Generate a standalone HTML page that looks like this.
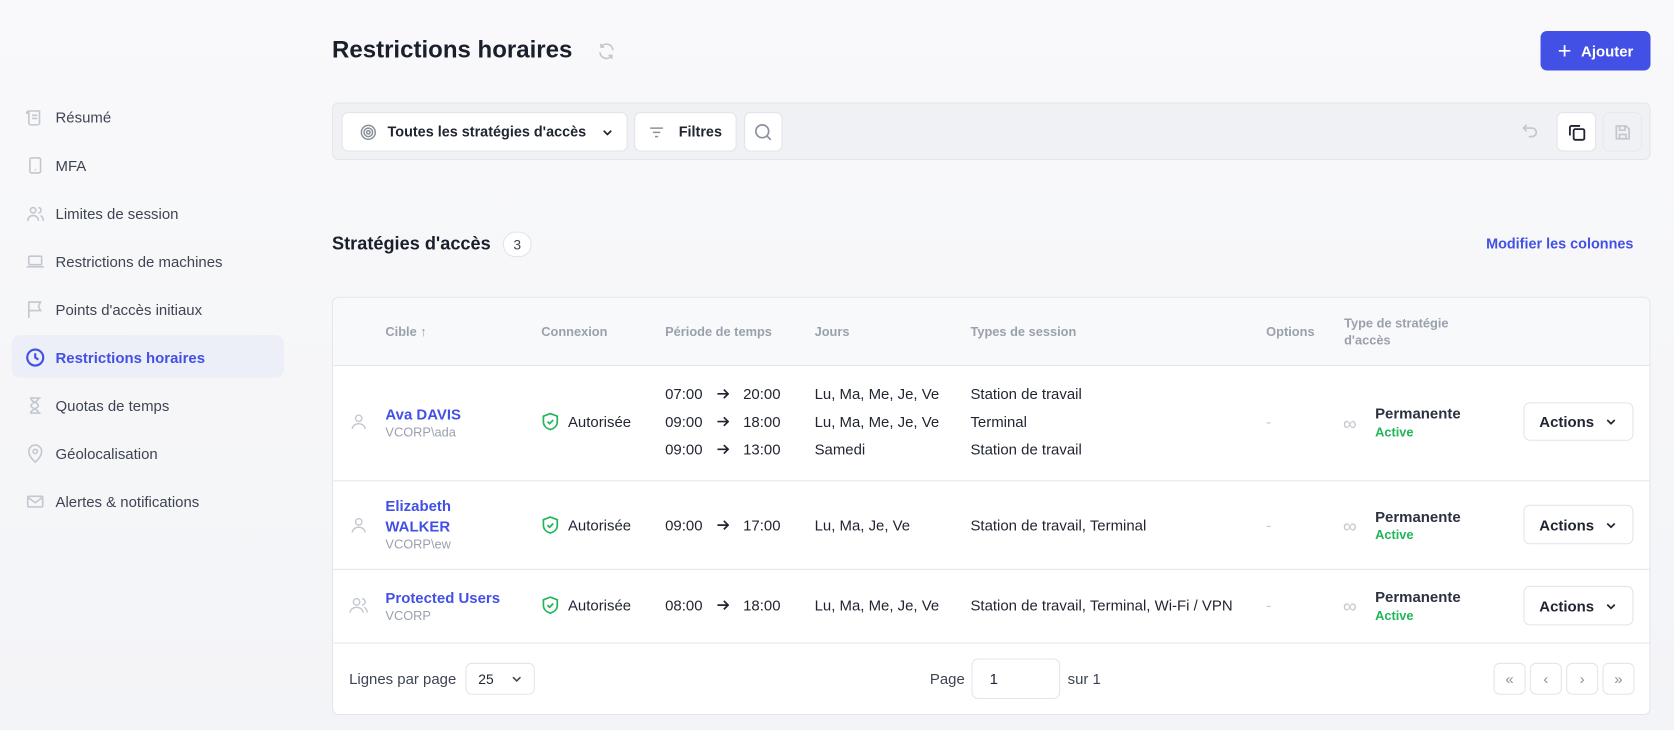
<!DOCTYPE html>
<html><head><meta charset="utf-8"><style>
html,body{margin:0;padding:0;width:1674px;height:730px;overflow:hidden;background:#f6f7f9}
#w{position:absolute;left:0;top:0;width:1568px;height:684px;transform:scale(1.06760,1.06725);transform-origin:0 0;font-family:"Liberation Sans",sans-serif;color:#1f2430;background:linear-gradient(180deg,#f9f9fb,#f3f4f7)}
.a{position:absolute}
.nav{position:absolute;left:24px;font-size:14px;color:#3d4452;display:flex;align-items:center;height:20px}
.nav svg{width:18px;height:18px;margin-right:10px;stroke:#c3c7cf;fill:none;stroke-width:1.5}
.btn{position:absolute;background:#fff;border:1px solid #e2e4e9;border-radius:6px;box-sizing:border-box;display:flex;align-items:center;justify-content:center;font-size:14px;font-weight:bold;color:#1f2430}
.th{position:absolute;font-size:12px;font-weight:bold;color:#9aa1ad;line-height:16px}
.t{position:absolute;font-size:14px;color:#1f2430;white-space:nowrap}
.hl{position:absolute;left:0;width:1235px;height:1px;background:#e3e5ea}
.lnk{color:#4350e6;font-weight:bold}
.sub{font-size:12px;color:#9aa1ad}
.grn{font-size:12px;color:#22b55a;font-weight:bold}
.ar{display:inline-block;width:12px;height:10px;margin:0 13px 0 13px;vertical-align:0px}
</style></head><body><div id="w">

<div class="nav" style="top:100px"><svg viewBox="0 0 18 18"><path d="M3 3h10v11a2 2 0 0 1-2 2H5M3 3a2 2 0 0 0-2 2h2M6 7h5M6 10h5M5 16a2 2 0 0 1-2-2V3"/></svg>Résumé</div>
<div class="nav" style="top:145px"><svg viewBox="0 0 18 18"><rect x="4" y="2" width="10" height="14" rx="1.5"/><path d="M8.5 13h1"/></svg>MFA</div>
<div class="nav" style="top:190px"><svg viewBox="0 0 18 18"><circle cx="7" cy="6" r="2.5"/><path d="M2 16c0-3 2-5 5-5s5 2 5 5M12 3.5a2.5 2.5 0 0 1 0 5M14 11c1.5.5 2.5 2 2.5 5"/></svg>Limites de session</div>
<div class="nav" style="top:235px"><svg viewBox="0 0 18 18"><rect x="3" y="4" width="12" height="8" rx="1"/><path d="M1 14h16"/></svg>Restrictions de machines</div>
<div class="nav" style="top:280px"><svg viewBox="0 0 18 18"><path d="M3 17V2h11l-2 4 2 4H3"/></svg>Points d'accès initiaux</div>
<div class="a" style="left:11px;top:314px;width:255px;height:40px;border-radius:8px;background:#eceef8"></div>
<div class="nav" style="top:325px;color:#4350e6;font-weight:bold"><svg viewBox="0 0 18 18" style="stroke:#4350e6;stroke-width:2"><circle cx="9" cy="9" r="7.5"/><path d="M9 5v4l3 2"/></svg>Restrictions horaires</div>
<div class="nav" style="top:370px"><svg viewBox="0 0 18 18"><path d="M4 2h10M4 16h10M5 2c0 4 7 4 7 7s-7 3-7 7M12 2c0 4-7 4-7 7s7 3 7 7"/></svg>Quotas de temps</div>
<div class="nav" style="top:415px"><svg viewBox="0 0 18 18"><path d="M9 17s6-5 6-10A6 6 0 0 0 3 7c0 5 6 10 6 10z"/><circle cx="9" cy="7" r="2"/></svg>Géolocalisation</div>
<div class="nav" style="top:460px"><svg viewBox="0 0 18 18"><rect x="2" y="4" width="14" height="10" rx="1"/><path d="M2 5l7 5 7-5"/></svg>Alertes &amp; notifications</div>

<div class="a" style="left:311px;top:34px;font-size:22.5px;font-weight:bold;color:#1a1f2b">Restrictions horaires</div>
<svg class="a" style="left:559px;top:39px" width="18" height="18" viewBox="0 0 18 18" fill="none" stroke="#c3c7cf" stroke-width="1.6"><path d="M15 8a6 6 0 0 0-11-3M3 10a6 6 0 0 0 11 3M4 2v3h3M14 16v-3h-3"/></svg>
<div class="a" style="left:1443px;top:29px;width:103px;height:37px;background:#4350e6;border-radius:6px;color:#fff;font-size:14px;font-weight:bold;display:flex;align-items:center;justify-content:center"><span style="font-size:22px;font-weight:normal;margin-right:9px;line-height:20px">+</span>Ajouter</div>

<div class="a" style="left:311px;top:96px;width:1235px;height:54px;background:#f0f1f4;border:1px solid #e3e5ea;border-radius:6px;box-sizing:border-box"></div>
<div class="btn" style="left:320px;top:105px;width:268px;height:37px;justify-content:flex-start;padding-left:16px;font-size:13.5px"><svg width="16" height="16" viewBox="0 0 16 16" fill="none" stroke="#8b919c" stroke-width="1.4"><circle cx="8" cy="8" r="6.5"/><circle cx="8" cy="8" r="4"/><circle cx="8" cy="8" r="1.6"/></svg><span style="margin-left:10px">Toutes les stratégies d'accès</span><svg style="margin-left:14px" width="12" height="12" viewBox="0 0 12 12" fill="none" stroke="#1f2430" stroke-width="1.6"><path d="M2.5 4.5 6 8l3.5-3.5"/></svg></div>
<div class="btn" style="left:594px;top:105px;width:96px;height:37px;font-size:13.5px"><svg width="14" height="12" viewBox="0 0 14 12" fill="none" stroke="#8b919c" stroke-width="1.4"><path d="M1 2h12M3.5 6h7M5.5 10h3"/></svg><span style="margin-left:14px">Filtres</span></div>
<div class="btn" style="left:697px;top:105px;width:36px;height:37px"><svg width="18" height="18" viewBox="0 0 18 18" fill="none" stroke="#8b919c" stroke-width="1.6"><circle cx="8" cy="8" r="6"/><path d="M12.5 12.5 16 16"/></svg></div>
<svg class="a" style="left:1424px;top:114px" width="18" height="18" viewBox="0 0 18 18" fill="none" stroke="#c3c7cf" stroke-width="1.6"><path d="M6 3 3 6l3 3M3 6h8a4 4 0 0 1 0 8H8"/></svg>
<div class="btn" style="left:1458px;top:105px;width:37px;height:37px"><svg width="18" height="18" viewBox="0 0 18 18" fill="none" stroke="#1f2430" stroke-width="1.7"><rect x="6" y="6" width="10" height="10" rx="1.5"/><path d="M12 3H4a1.5 1.5 0 0 0-1.5 1.5V12"/></svg></div>
<div class="btn" style="left:1501px;top:105px;width:37px;height:37px;background:#f0f1f4;border-color:#e8e9ed"><svg width="18" height="18" viewBox="0 0 18 18" fill="none" stroke="#c3c7cf" stroke-width="1.6"><path d="M3 3h9l3 3v9H3z"/><path d="M6 3v4h5V3M6 15v-4h6v4"/></svg></div>

<div class="a" style="left:311px;top:219px;font-size:17px;font-weight:bold;color:#1a1f2b">Stratégies d'accès</div>
<div class="a" style="left:471px;top:217px;width:27px;height:24px;border:1px solid #e2e4e9;border-radius:12px;background:#fff;box-sizing:border-box;font-size:13px;color:#3d4452;display:flex;align-items:center;justify-content:center">3</div>
<div class="a lnk" style="right:38px;top:221px;font-size:13.5px">Modifier les colonnes</div>

<div class="a" style="left:311px;top:278px;width:1235px;height:392px;background:#fff;border:1px solid #e3e5ea;border-radius:6px;box-sizing:border-box;overflow:hidden">
 <div class="a" style="left:0;top:0;width:1235px;height:64px;background:#f8f9fb"></div>
 <div class="hl" style="top:63px"></div><div class="hl" style="top:171px"></div><div class="hl" style="top:254px"></div><div class="hl" style="top:323px"></div>
 <div class="th" style="left:49px;top:24px">Cible ↑</div>
 <div class="th" style="left:195px;top:24px">Connexion</div>
 <div class="th" style="left:311px;top:24px">Période de temps</div>
 <div class="th" style="left:451px;top:24px">Jours</div>
 <div class="th" style="left:597px;top:24px">Types de session</div>
 <div class="th" style="left:874px;top:24px">Options</div>
 <div class="th" style="left:947px;top:16px">Type de stratégie<br>d'accès</div>
</div>

<svg class="a" style="left:328px;top:387px" width="16" height="16" viewBox="0 0 16 16" fill="none" stroke="#c3c7cf" stroke-width="1.3"><circle cx="8" cy="5" r="3"/><path d="M2 15c0-3 3-5 6-5s6 2 6 5"/></svg>
<svg class="a" style="left:328px;top:484px" width="16" height="16" viewBox="0 0 16 16" fill="none" stroke="#c3c7cf" stroke-width="1.3"><circle cx="8" cy="5" r="3"/><path d="M2 15c0-3 3-5 6-5s6 2 6 5"/></svg>
<svg class="a" style="left:327px;top:559px" width="18" height="16" viewBox="0 0 18 16" fill="none" stroke="#c3c7cf" stroke-width="1.3"><circle cx="7" cy="5" r="3"/><path d="M1 15c0-3 3-5 6-5s6 2 6 5M12 2a3 3 0 0 1 0 6M14 10c2 1 3 3 3 5"/></svg>

<div class="t lnk" style="left:361px;top:380px">Ava DAVIS</div><div class="t sub" style="left:361px;top:398px">VCORP\ada</div>
<div class="t lnk" style="left:361px;top:465px;line-height:19px">Elizabeth<br>WALKER</div><div class="t sub" style="left:361px;top:503px">VCORP\ew</div>
<div class="t lnk" style="left:361px;top:552px">Protected Users</div><div class="t sub" style="left:361px;top:570px">VCORP</div>

<svg class="a" style="left:507px;top:386px" width="17" height="18" viewBox="0 0 17 18" fill="none" stroke="#22b55a" stroke-width="1.6"><path d="M8.5 1.5 15 4v5c0 4-3 6.5-6.5 7.5C5 15.5 2 13 2 9V4z"/><path d="m5.8 9 2 2 3.4-3.5"/></svg><div class="t" style="left:532px;top:387px">Autorisée</div>
<svg class="a" style="left:507px;top:483px" width="17" height="18" viewBox="0 0 17 18" fill="none" stroke="#22b55a" stroke-width="1.6"><path d="M8.5 1.5 15 4v5c0 4-3 6.5-6.5 7.5C5 15.5 2 13 2 9V4z"/><path d="m5.8 9 2 2 3.4-3.5"/></svg><div class="t" style="left:532px;top:484px">Autorisée</div>
<svg class="a" style="left:507px;top:558px" width="17" height="18" viewBox="0 0 17 18" fill="none" stroke="#22b55a" stroke-width="1.6"><path d="M8.5 1.5 15 4v5c0 4-3 6.5-6.5 7.5C5 15.5 2 13 2 9V4z"/><path d="m5.8 9 2 2 3.4-3.5"/></svg><div class="t" style="left:532px;top:559px">Autorisée</div>

<div class="t" style="left:623px;top:361px">07:00<svg class="ar" viewBox="0 0 12 10" fill="none" stroke="#1f2430" stroke-width="1.6"><path d="M1 5h10M7 1l4 4-4 4"/></svg>20:00</div>
<div class="t" style="left:623px;top:387px">09:00<svg class="ar" viewBox="0 0 12 10" fill="none" stroke="#1f2430" stroke-width="1.6"><path d="M1 5h10M7 1l4 4-4 4"/></svg>18:00</div>
<div class="t" style="left:623px;top:413px">09:00<svg class="ar" viewBox="0 0 12 10" fill="none" stroke="#1f2430" stroke-width="1.6"><path d="M1 5h10M7 1l4 4-4 4"/></svg>13:00</div>
<div class="t" style="left:623px;top:484px">09:00<svg class="ar" viewBox="0 0 12 10" fill="none" stroke="#1f2430" stroke-width="1.6"><path d="M1 5h10M7 1l4 4-4 4"/></svg>17:00</div>
<div class="t" style="left:623px;top:559px">08:00<svg class="ar" viewBox="0 0 12 10" fill="none" stroke="#1f2430" stroke-width="1.6"><path d="M1 5h10M7 1l4 4-4 4"/></svg>18:00</div>

<div class="t" style="left:763px;top:361px">Lu, Ma, Me, Je, Ve</div>
<div class="t" style="left:763px;top:387px">Lu, Ma, Me, Je, Ve</div>
<div class="t" style="left:763px;top:413px">Samedi</div>
<div class="t" style="left:763px;top:484px">Lu, Ma, Je, Ve</div>
<div class="t" style="left:763px;top:559px">Lu, Ma, Me, Je, Ve</div>

<div class="t" style="left:909px;top:361px">Station de travail</div>
<div class="t" style="left:909px;top:387px">Terminal</div>
<div class="t" style="left:909px;top:413px">Station de travail</div>
<div class="t" style="left:909px;top:484px">Station de travail, Terminal</div>
<div class="t" style="left:909px;top:559px">Station de travail, Terminal, Wi-Fi / VPN</div>

<div class="t" style="left:1186px;top:387px;color:#c3c7cf">-</div>
<div class="t" style="left:1186px;top:484px;color:#c3c7cf">-</div>
<div class="t" style="left:1186px;top:559px;color:#c3c7cf">-</div>

<div class="t" style="left:1258px;top:387px;color:#c3c7cf;font-size:18px">∞</div><div class="t" style="left:1288px;top:379px;font-weight:bold;color:#2b3140">Permanente</div><div class="t grn" style="left:1288px;top:398px">Active</div>
<div class="t" style="left:1258px;top:483px;color:#c3c7cf;font-size:18px">∞</div><div class="t" style="left:1288px;top:476px;font-weight:bold;color:#2b3140">Permanente</div><div class="t grn" style="left:1288px;top:494px">Active</div>
<div class="t" style="left:1258px;top:558px;color:#c3c7cf;font-size:18px">∞</div><div class="t" style="left:1288px;top:551px;font-weight:bold;color:#2b3140">Permanente</div><div class="t grn" style="left:1288px;top:570px">Active</div>

<div class="btn" style="left:1427px;top:377px;width:103px;height:36px">Actions<svg style="margin-left:10px" width="12" height="12" viewBox="0 0 12 12" fill="none" stroke="#1f2430" stroke-width="1.6"><path d="M2.5 4.5 6 8l3.5-3.5"/></svg></div>
<div class="btn" style="left:1427px;top:473px;width:103px;height:37px">Actions<svg style="margin-left:10px" width="12" height="12" viewBox="0 0 12 12" fill="none" stroke="#1f2430" stroke-width="1.6"><path d="M2.5 4.5 6 8l3.5-3.5"/></svg></div>
<div class="btn" style="left:1427px;top:549px;width:103px;height:37px">Actions<svg style="margin-left:10px" width="12" height="12" viewBox="0 0 12 12" fill="none" stroke="#1f2430" stroke-width="1.6"><path d="M2.5 4.5 6 8l3.5-3.5"/></svg></div>

<div class="t" style="left:327px;top:628px;color:#3d4452">Lignes par page</div>
<div class="btn" style="left:436px;top:621px;width:65px;height:30px;font-weight:normal;font-size:13px;justify-content:flex-start;padding-left:11px">25<svg style="margin-left:16px" width="12" height="12" viewBox="0 0 12 12" fill="none" stroke="#3d4452" stroke-width="1.4"><path d="M2.5 4.5 6 8l3.5-3.5"/></svg></div>
<div class="t" style="left:871px;top:628px;color:#3d4452">Page</div>
<div class="btn" style="left:910px;top:617px;width:83px;height:38px;font-weight:normal;justify-content:flex-start;padding-left:16px">1</div>
<div class="t" style="left:1000px;top:628px;color:#3d4452">sur 1</div>
<div class="btn" style="left:1399px;top:621px;width:30px;height:30px;color:#8b919c;font-weight:normal">«</div>
<div class="btn" style="left:1433px;top:621px;width:30px;height:30px;color:#8b919c;font-weight:normal">‹</div>
<div class="btn" style="left:1467px;top:621px;width:30px;height:30px;color:#8b919c;font-weight:normal">›</div>
<div class="btn" style="left:1501px;top:621px;width:30px;height:30px;color:#8b919c;font-weight:normal">»</div>

</div></body></html>
